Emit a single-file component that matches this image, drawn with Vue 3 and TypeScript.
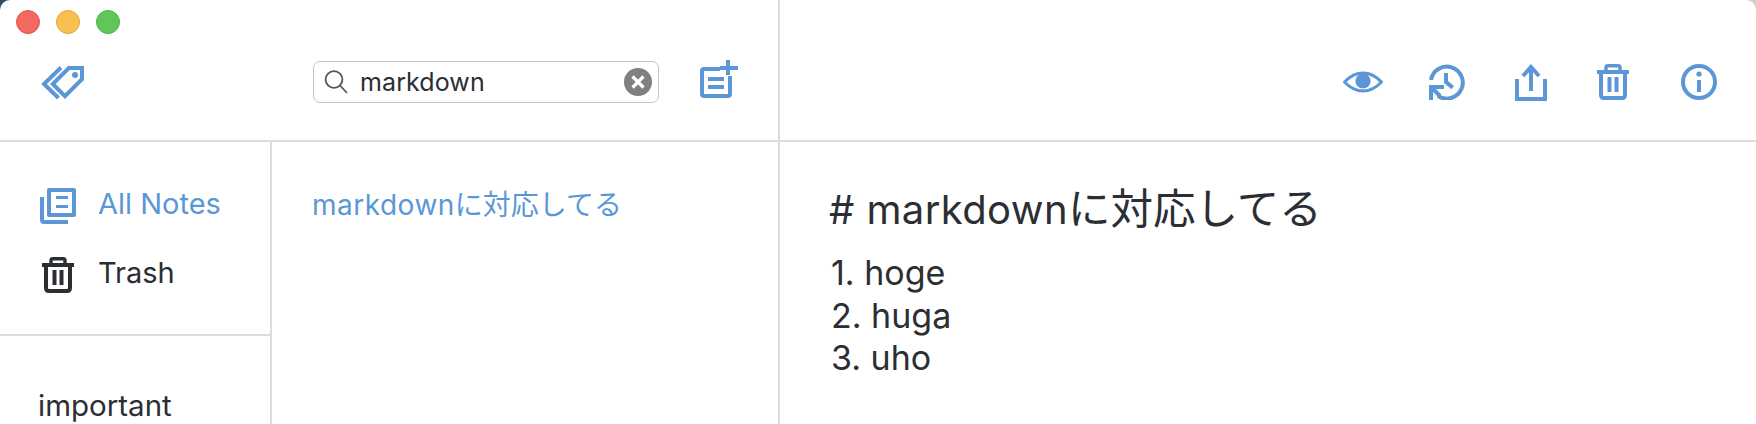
<script setup lang="ts">
const lights: string[] = ['red', 'yellow', 'green']
const items: string[] = ['1. hoge', '2. huga', '3. uho']
</script>

<template>
  <div class="window">
    <header class="top">
      <div class="top-left">
        <div class="lights">
          <span v-for="l in lights" :key="l" class="light" :class="l"></span>
        </div>
        <div class="tools">
          <svg class="tag" width="44" height="34" viewBox="0 0 44 34" fill="none" stroke="#5b97d6" stroke-width="4">
            <path d="M21 1.5 L4 18 L18.5 32" />
            <path d="M28.8 2 H42 V13.2 L25 30.2 L12.8 18 Z" />
            <circle cx="35" cy="9" r="3" fill="#5b97d6" stroke="none" />
          </svg>
          <div class="search">
            <svg width="26" height="26" viewBox="0 0 26 26" fill="none" stroke="#555" stroke-width="1.8">
              <circle cx="11" cy="10.5" r="8.4" />
              <path d="M17 16.5 L24 24" />
            </svg>
            <span class="query">markdown</span>
            <svg class="clear" width="28" height="28" viewBox="0 0 28 28">
              <circle cx="14" cy="14" r="14" fill="#808080" />
              <path d="M8.5 8.5 L19.5 19.5 M19.5 8.5 L8.5 19.5" stroke="#fff" stroke-width="3.2" />
            </svg>
          </div>
          <svg class="new" width="38" height="38" viewBox="0 0 38 38" fill="none" stroke="#5b97d6" stroke-width="4">
            <path d="M20 9 H4 Q2 9 2 11 V34 Q2 36 4 36 H28 Q30 36 30 34 V16" />
            <path d="M8 19 H24 M8 27 H24" />
            <path d="M28 0 V15 M20 8 H38" />
          </svg>
        </div>
      </div>
      <div class="top-right">
        <svg class="eye" width="40" height="22" viewBox="0 0 40 22" fill="none">
          <path d="M1.5 11 Q10 2 20 2 Q30 2 38.5 11 Q30 20 20 20 Q10 20 1.5 11 Z" stroke="#5b97d6" stroke-width="3" />
          <circle cx="20" cy="10" r="7.6" fill="#5b97d6" />
        </svg>
        <svg width="36" height="36" viewBox="0 0 36 36" fill="none" stroke="#5b97d6" stroke-width="4">
          <path d="M2 16 A16 16 0 1 1 9 32" />
          <path d="M17 9 V18 L23.7 23.6" />
          <path d="M2 36 V23 H15" />
          <path d="M3 24 L11 32" />
        </svg>
        <svg width="32" height="37" viewBox="0 0 32 37" fill="none" stroke="#5b97d6" stroke-width="4">
          <path d="M2 15 V35 H30 V15" />
          <path d="M16 27 V4" />
          <path d="M8 12 L16 3 L24 12" />
        </svg>
        <svg class="bin" width="32" height="36" viewBox="0 0 32 36" fill="none" stroke="#5b97d6" stroke-width="4">
          <path d="M0 8 H32" />
          <path d="M9 6 V3.5 Q9 1.8 11 1.8 H21 Q23 1.8 23 3.5 V6" stroke-width="3.4" />
          <path d="M4 8 V31 Q4 34 7 34 H25 Q28 34 28 31 V8" />
          <path d="M12.5 13 V28 M19.5 13 V28" />
        </svg>
        <svg width="36" height="36" viewBox="0 0 36 36" fill="none" stroke="#5b97d6" stroke-width="4">
          <circle cx="18" cy="18" r="16" />
          <path d="M18 16 V28" />
          <circle cx="18" cy="10" r="2.6" fill="#5b97d6" stroke="none" />
        </svg>
      </div>
    </header>
    <main class="body">
      <aside class="side">
        <nav class="nav">
          <div class="nav-row active">
            <svg width="36" height="36" viewBox="0 0 36 36" fill="none" stroke="#5b97d6" stroke-width="4">
              <path d="M11 2 H34 V27 H9 V2 Z" stroke-linejoin="round" />
              <path d="M16 9.5 H28 M16 18.5 H28" stroke-width="3" />
              <path d="M2 9 V32 Q2 34 4 34 H28" />
            </svg>
            <span class="nav-label">All Notes</span>
          </div>
          <div class="nav-row">
            <svg width="32" height="36" viewBox="0 0 32 36" fill="none" stroke="#2b2e33" stroke-width="4">
              <path d="M0 8 H32" />
              <path d="M9 6 V3.5 Q9 1.8 11 1.8 H21 Q23 1.8 23 3.5 V6" stroke-width="3.4" />
              <path d="M4 8 V31 Q4 34 7 34 H25 Q28 34 28 31 V8" />
              <path d="M12.5 13 V28 M19.5 13 V28" />
            </svg>
            <span class="nav-label">Trash</span>
          </div>
        </nav>
        <div class="tags">important</div>
      </aside>
      <section class="list">
        <div class="note-title"><span class="latin">markdown</span>に対応してる</div>
      </section>
      <article class="editor">
        <h1 class="heading"><span class="latin"># markdown</span>に対応してる</h1>
        <p v-for="i in items" :key="i" class="line">{{ i }}</p>
      </article>
    </main>
  </div>
</template>

<style>
html, body { margin: 0; background: linear-gradient(90deg, #2f4c68 50%, #cfcfcf 50%); }
</style>

<style scoped>
.window {
  width: 1756px;
  height: 424px;
  overflow: hidden;
  background: #fff;
  border-radius: 10px 10px 0 0;
  font-family: Inter, "Noto Sans CJK JP", sans-serif;
  color: #2b2e33;
  display: flex;
  flex-direction: column;
}
.top {
  display: flex;
  height: 142px;
  flex: none;
  border-bottom: 2px solid #dcdcdc;
  box-sizing: border-box;
}
.top-left {
  width: 780px;
  box-sizing: border-box;
  border-right: 2px solid #dcdcdc;
  flex: none;
}
.lights {
  display: flex;
  gap: 16px;
  padding: 10px 0 0 16px;
}
.light {
  width: 24px;
  height: 24px;
  box-sizing: border-box;
  border-radius: 50%;
  border: 1px solid;
}
.red { background: #f2695f; border-color: #e0574e; }
.yellow { background: #f9c050; border-color: #e2a63c; }
.green { background: #5ec757; border-color: #4fb048; }
.tools {
  display: flex;
  align-items: flex-start;
  padding: 0 0 0 40px;
  margin-top: 26px;
}
.tag { margin-top: 6px; }
.search {
  margin-left: 229px;
  width: 346px;
  height: 42px;
  margin-top: 1px;
  box-sizing: border-box;
  border: 1.5px solid #c4c4c4;
  border-radius: 7px;
  display: flex;
  align-items: center;
  padding: 0 6px 0 9px;
}
.query {
  font-size: 25px;
  letter-spacing: 0.1px;
  margin-left: 11px;
  flex: 1;
  color: #2b2e33;
}
.new { margin-left: 41px; }
.top-right {
  flex: 1;
  display: flex;
  align-items: center;
  padding-left: 563px;
  padding-top: 24px;
  gap: 50px;
}
.eye { margin-right: -4px; }
.bin { margin-right: 2px; }
.body {
  flex: 1;
  display: flex;
  min-height: 0;
}
.side {
  width: 272px;
  flex: none;
  box-sizing: border-box;
  border-right: 2px solid #dcdcdc;
}
.nav {
  height: 194px;
  box-sizing: border-box;
  border-bottom: 2px solid #dcdcdc;
  padding: 46px 0 0 40px;
  display: flex;
  flex-direction: column;
  gap: 33px;
}
.nav-row {
  display: flex;
  align-items: center;
  gap: 22px;
  height: 36px;
  font-size: 29px;
}
.nav-row svg { width: 36px; }
.nav-row.active { color: #5b97d6; }
.nav-label { padding-bottom: 6px; }
.tags {
  padding: 51px 0 0 38px;
  font-size: 29.5px;
}
.list {
  width: 508px;
  flex: none;
  box-sizing: border-box;
  border-right: 2px solid #dcdcdc;
  padding: 41px 0 0 40px;
}
.note-title {
  font-size: 28px;
  color: #5b97d6;
}
.note-title .latin { letter-spacing: 0.5px; }
.editor {
  flex: 1;
  padding: 42px 0 0 51px;
}
.heading {
  margin: 0 0 17px -2px;
  font-size: 42.5px;
  font-weight: 400;
  line-height: 50px;
}
.heading .latin {
  font-size: 40px;
  letter-spacing: 0.4px;
}
.line {
  margin: 0;
  font-size: 34px;
  line-height: 42.5px;
}
</style>
